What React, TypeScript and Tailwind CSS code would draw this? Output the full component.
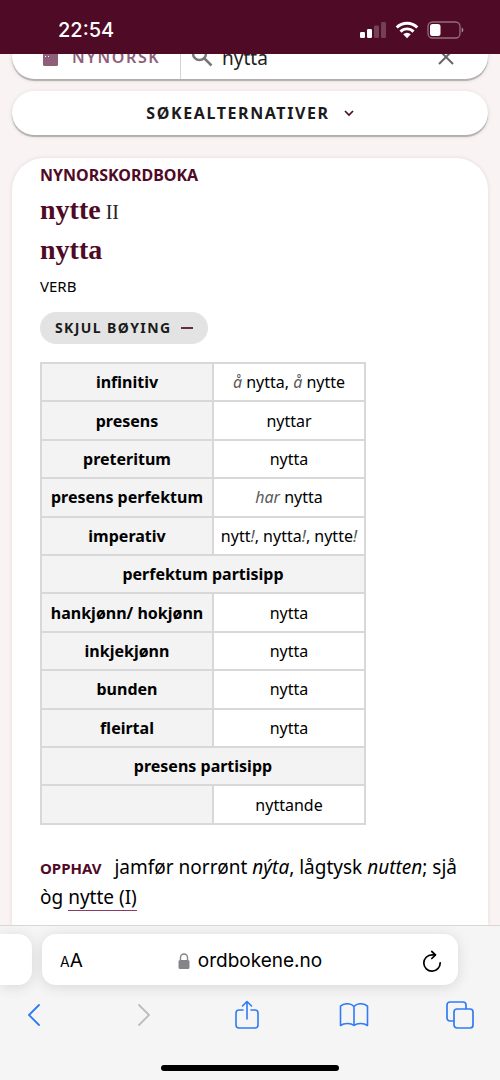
type Row = {
  label?: string;
  forms?: React.ReactNode;
  section?: string;
};

const Aux = ({ children }: { children: string }) => (
  <em className="text-[#5a5a5a]">{children}</em>
);

const rows: Row[] = [
  { label: "infinitiv", forms: <><Aux>å</Aux> nytta, <Aux>å</Aux> nytte</> },
  { label: "presens", forms: "nyttar" },
  { label: "preteritum", forms: "nytta" },
  { label: "presens perfektum", forms: <><Aux>har</Aux> nytta</> },
  { label: "imperativ", forms: <>nytt<Aux>!</Aux>, nytta<Aux>!</Aux>, nytte<Aux>!</Aux></> },
  { section: "perfektum partisipp" },
  { label: "hankjønn/ hokjønn", forms: "nytta" },
  { label: "inkjekjønn", forms: "nytta" },
  { label: "bunden", forms: "nytta" },
  { label: "fleirtal", forms: "nytta" },
  { section: "presens partisipp" },
  { label: "", forms: "nyttande" },
];

function StatusBar() {
  return (
    <header className="relative z-10 flex h-[54px] shrink-0 items-center justify-between bg-[#4f0a26] pt-1.5 pr-9 pl-[58px] text-white">
      <span className="font-['Inter',sans-serif] text-xl font-medium">22:54</span>
      <div className="flex items-center gap-2">
        <svg width="27" height="18" viewBox="0 0 27 18" fill="currentColor">
          <rect x="0" y="11" width="5" height="6" rx="1.3" />
          <rect x="7" y="8" width="5" height="9" rx="1.3" />
          <rect x="14" y="4.500" width="5" height="12.500" rx="1.3" opacity=".22" />
          <rect x="21" y="1" width="5" height="16" rx="1.3" opacity=".22" />
        </svg>
        <svg width="24" height="18" viewBox="0 0 24 18" fill="none" stroke="currentColor" strokeWidth="2.900">
          <path d="M1.700 6.500a14.700 14.700 0 0 1 20.600 0" />
          <path d="M5.500 10.600a9.200 9.200 0 0 1 13 0" />
          <path d="M12 17.200 8.200 13.300a5.400 5.400 0 0 1 7.600 0z" fill="currentColor" stroke="none" />
        </svg>
        <svg width="37" height="18" viewBox="0 0 37 18">
          <rect x="1" y="1" width="32" height="16" rx="4.500" fill="none" stroke="#fff" strokeOpacity=".4" strokeWidth="1.300" />
          <rect x="3" y="3" width="10.500" height="12" rx="2.500" fill="#fff" />
          <path d="M34.700 6.500v5c2.200-.8 2.200-4.200 0-5z" fill="#fff" fillOpacity=".5" />
        </svg>
      </div>
    </header>
  );
}

function SearchBar() {
  return (
    <form className="mx-3 -mt-5 flex h-[45px] items-center rounded-full bg-white shadow-[0_2px_1px_#b3adad,0_1px_5px_#0000001f]">
      <button type="button" className="flex h-full w-[169px] items-center border-r border-[#d5d5d5] pl-[31px] text-[#8f5f7a]">
        <svg width="15" height="18" viewBox="0 0 15 18" className="mr-3.5">
          <rect width="15" height="18" rx="1.500" fill="currentColor" />
          <path d="M2 8.500h6" stroke="#fff" strokeDasharray="1 2" />
        </svg>
        <span className="text-base font-semibold tracking-widest">NYNORSK</span>
      </button>
      <svg width="24" height="24" viewBox="0 0 24 24" fill="none" stroke="#777" strokeWidth="2.500" className="ml-[9px]">
        <circle cx="9.500" cy="8.500" r="6.500" />
        <path d="m14 13 7.500 7.500" />
      </svg>
      <input
        aria-label="Søk"
        defaultValue="nytta"
        className="ml-2 min-w-0 flex-1 bg-transparent pt-1 text-[19px] text-[#222] outline-none"
      />
      <button type="button" aria-label="Tøm" className="mr-[34px] text-[#666]">
        <svg width="16" height="16" viewBox="0 0 16 16" fill="none" stroke="currentColor" strokeWidth="2">
          <path d="m1 1 14 14M15 1 1 15" />
        </svg>
      </button>
    </form>
  );
}

function InflectionTable() {
  return (
    <table className="mt-[18px] h-[463px] w-[326px] table-fixed border-collapse border-2 border-[#d8d8d8] text-center text-base leading-6 text-black">
      <colgroup>
        <col className="w-[172px]" />
        <col />
      </colgroup>
      <tbody>
        {rows.map((row, i) =>
          row.section ? (
            <tr key={i}>
              <th colSpan={2} className="border-2 border-[#d8d8d8] bg-[#f3f3f3] font-bold">
                {row.section}
              </th>
            </tr>
          ) : (
            <tr key={i}>
              <th className="border-2 border-[#d8d8d8] bg-[#f3f3f3] font-bold whitespace-nowrap">{row.label}</th>
              <td className="border-2 border-[#d8d8d8] whitespace-nowrap">{row.forms}</td>
            </tr>
          )
        )}
      </tbody>
    </table>
  );
}

function Article() {
  return (
    <article className="mx-3 mt-[23px] flex-1 rounded-t-[32px] bg-white pt-1.5 pr-5 pl-7 shadow-[0_0_4px_#4f0a261f]">
      <h2 className="text-base leading-[22px] font-bold text-[#4f0a26]">NYNORSKORDBOKA</h2>
      <h1 className="mt-1 font-['Liberation_Serif',serif] text-[28px] leading-10 font-bold text-[#4f0a26]">
        <span className="block">
          nytte <span className="-ml-0.5 text-xl font-normal text-[#222]">II</span>
        </span>
        <span className="block">nytta</span>
      </h1>
      <p className="mt-1 text-[15px] leading-6 text-black">VERB</p>
      <button type="button" className="mt-3.5 flex h-8 items-center gap-2.5 rounded-full bg-[#e3e3e3] px-[15px] text-sm font-bold tracking-widest text-[#1b1b1b]">
        SKJUL BØYING
        <svg width="12" height="12" viewBox="0 0 12 12" stroke="#4f0a26" strokeWidth="1.700">
          <path d="M0 6h12" />
        </svg>
      </button>
      <InflectionTable />
      <p className="mt-7 text-[19px] leading-[29px] text-black">
        <span className="mr-2 text-[15px] font-bold text-[#4f0a26]">OPPHAV</span>{" "}
        jamfør norrønt <em>nýta</em>, lågtysk <em>nutten</em>; sjå òg{" "}
        <a href="#nytte" className="border-b border-[#8b3a68]">nytte (I)</a>
      </p>
    </article>
  );
}

function BrowserBar() {
  return (
    <footer className="relative z-10 shrink-0 border-t border-[#d9d7d8] bg-[#f5f5f6] pt-2 font-['Inter',sans-serif]">
      <div className="flex h-[51px] gap-2.5 pr-[42px]">
        <div className="w-8 rounded-r-[14px] bg-white shadow-[0_2px_14px_#0000001f]" />
        <div className="flex flex-1 items-center justify-between rounded-[14px] bg-white pt-1 pr-[18px] pl-[18px] text-black shadow-[0_2px_14px_#0000001f]">
          <button type="button" aria-label="Sideinnstillinger" className="flex w-8 items-baseline">
            <span className="text-sm">A</span>
            <span className="text-[19px]">A</span>
          </button>
          <button type="button" className="flex items-center gap-2 text-[19px]">
            <svg width="12" height="17" viewBox="0 0 12 17">
              <rect x=".5" y="7" width="11" height="9" rx="1.500" fill="#858589" />
              <path d="M2.500 7.500V4.500a3.500 3.500 0 0 1 7 0v3" fill="none" stroke="#858589" strokeWidth="1.400" />
            </svg>
            ordbokene.no
          </button>
          <button type="button" aria-label="Last på nytt" className="flex w-8 justify-center pl-4">
            <svg width="20" height="24" viewBox="0 0 20 24" fill="none" stroke="currentColor" strokeWidth="1.700" strokeLinecap="round" strokeLinejoin="round" className="shrink-0">
              <path d="M18.200 12.800A8.200 8.200 0 1 1 10 4.800h3.300" />
              <path d="m9.800 1.500 3.700 3.300-3.700 3.700" />
            </svg>
          </button>
        </div>
      </div>
      <nav className="mt-3.5 flex items-center justify-between pr-6 pl-[18px] text-[#2f7bf6]">
        <button type="button" aria-label="Tilbake" className="flex size-8 items-center justify-center">
          <svg width="14" height="24" viewBox="0 0 14 24" fill="none" stroke="currentColor" strokeWidth="1.800" strokeLinecap="round" strokeLinejoin="round">
            <path d="M12 2 2 12l10 10" />
          </svg>
        </button>
        <button type="button" aria-label="Fram" className="flex size-8 items-center justify-end text-[#bdbdc0]">
          <svg width="14" height="24" viewBox="0 0 14 24" fill="none" stroke="currentColor" strokeWidth="1.800" strokeLinecap="round" strokeLinejoin="round" className="mr-1.5">
            <path d="m2 2 10 10L2 22" />
          </svg>
        </button>
        <button type="button" aria-label="Del" className="flex size-8 items-center justify-center">
          <svg width="24" height="30" viewBox="0 0 24 30" fill="none" stroke="currentColor" strokeWidth="1.600" strokeLinecap="round" strokeLinejoin="round">
            <path d="M8 10H4a3 3 0 0 0-3 3v12a3 3 0 0 0 3 3h16a3 3 0 0 0 3-3V13a3 3 0 0 0-3-3h-4" />
            <path d="M12 19V1.500M7.500 6 12 1.500 16.500 6" />
          </svg>
        </button>
        <button type="button" aria-label="Bokmerke" className="flex size-8 items-center justify-center">
          <svg width="30" height="24" viewBox="0 0 30 24" fill="none" stroke="currentColor" strokeWidth="1.600" strokeLinejoin="round">
            <path d="M15 3.500C12-.2 5 0 1.500 3.200v19.300c3.500-2.700 10.500-2.700 13.500 0 3-2.700 10-2.700 13.500 0V3.200C25 0 18-.2 15 3.500zM15 3.500v19" />
          </svg>
        </button>
        <button type="button" aria-label="Faner" className="flex size-8 items-center justify-center">
          <svg width="28" height="28" viewBox="0 0 28 28" fill="none" stroke="currentColor" strokeWidth="1.700">
            <rect x="8" y="8" width="19" height="19" rx="3" />
            <path d="M8 20H4a3 3 0 0 1-3-3V4a3 3 0 0 1 3-3h13a3 3 0 0 1 3 3v4" />
          </svg>
        </button>
      </nav>
      <div className="mx-auto mt-[34px] mb-[9px] h-1.5 w-[178px] rounded-full bg-black" />
    </footer>
  );
}

export default function App() {
  return (
    <div className="flex min-h-screen flex-col bg-[#f9f3f3] font-['Noto_Sans',sans-serif]">
      <StatusBar />
      <main className="flex flex-1 flex-col overflow-hidden">
        <SearchBar />
        <button
          type="button"
          className="mx-3 mt-3 flex h-11 shrink-0 items-center justify-center gap-3.5 rounded-full bg-white text-base font-bold tracking-widest text-[#1b1b1b] shadow-[0_2px_1px_#b3adad,0_1px_5px_#0000001f]"
        >
          SØKEALTERNATIVER
          <svg width="10" height="7" viewBox="0 0 10 7" fill="none" stroke="#4f0a26" strokeWidth="1.700">
            <path d="m1 1 4 4 4-4" />
          </svg>
        </button>
        <Article />
      </main>
      <BrowserBar />
    </div>
  );
}
